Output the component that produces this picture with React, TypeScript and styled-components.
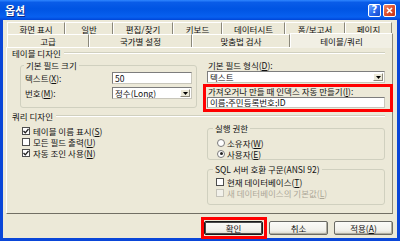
import React from 'react';
import styled, { createGlobalStyle } from 'styled-components';

const GlobalStyle = createGlobalStyle`
  html, body {
    margin: 0;
    padding: 0;
    background: #ffffff;
  }
  body {
    font-family: 'Noto Sans CJK KR', 'Noto Sans', sans-serif;
    color: #111;
  }
`;

const Window = styled.div`
  width: 400px;
  height: 241px;
  display: flex;
  flex-direction: column;
  background: #0a46d8;
  overflow: hidden;
`;

const TitleBar = styled.div`
  height: 20px;
  flex: none;
  display: flex;
  align-items: center;
  padding: 0 4px 0 5px;
  background: linear-gradient(
    to bottom,
    #2f86ff 0%,
    #0a5ce8 12%,
    #0054e3 45%,
    #0860f0 85%,
    #0045d8 100%
  );
`;

const Title = styled.div`
  flex: 1;
  color: #fff;
  font-size: 11px;
  font-weight: bold;
  line-height: 12px;
  text-shadow: 1px 1px 0 #0a2a8a;
`;

interface CaptionButtonProps {
  $kind: 'help' | 'close';
}

const CaptionButton = styled.div<CaptionButtonProps>`
  width: 13px;
  height: 13px;
  box-sizing: border-box;
  margin-left: 2px;
  border: 1px solid #fff;
  border-radius: 2px;
  display: flex;
  align-items: center;
  justify-content: center;
  background: ${(p) =>
    p.$kind === 'close'
      ? 'linear-gradient(135deg, #f08a6a 0%, #e0502e 50%, #c1331a 100%)'
      : 'linear-gradient(135deg, #6ea4ff 0%, #2a6cf0 50%, #1447c8 100%)'};
  color: #fff;
  font-family: 'DejaVu Sans', sans-serif;
  font-weight: bold;
  font-size: 10px;
  line-height: 10px;
`;

const Body = styled.div`
  flex: 1;
  margin: 0 3px 3px 3px;
  padding: 2px 4px 0 3px;
  background: #ece9d8;
  display: flex;
  flex-direction: column;
`;

interface TabRowProps {
  $h: number;
}

const TabRow = styled.div<TabRowProps>`
  display: flex;
  height: ${(p) => p.$h}px;
  margin-left: 1px;
`;

interface TabProps {
  $w: number;
  $active?: boolean;
}

const Tab = styled.div<TabProps>`
  width: ${(p) => p.$w}px;
  box-sizing: border-box;
  border-top: 1px solid #ffffff;
  border-left: 1px solid #ffffff;
  border-right: 1px solid #8b887a;
  display: flex;
  align-items: center;
  justify-content: center;
  font-size: 8.5px;
  line-height: 10px;
  white-space: nowrap;
  height: ${(p) => (p.$active ? 'calc(100% + 2px)' : '100%')};
  margin-top: ${(p) => (p.$active ? '-1px' : '0')};
  background: ${(p) => (p.$active ? '#f1efe4' : '#ece9d8')};
  position: ${(p) => (p.$active ? 'relative' : 'static')};
  z-index: ${(p) => (p.$active ? 1 : 0)};
`;

const Panel = styled.div`
  width: 387px;
  height: 167px;
  box-sizing: border-box;
  border-top: 1px solid #ffffff;
  border-left: 1px solid #ffffff;
  border-right: 1px solid #8b887a;
  border-bottom: 1px solid #716f64;
  background: #ece9d8;
  display: flex;
  flex-direction: column;
`;

interface SectionHeaderProps {
  $top: number;
}

const SectionHeader = styled.div<SectionHeaderProps>`
  display: flex;
  align-items: center;
  height: 10px;
  margin-top: ${(p) => p.$top}px;
  padding: 0 7px 0 5px;
  font-size: 8.5px;
  line-height: 10px;
  white-space: nowrap;
  &::after {
    content: '';
    flex: 1;
    margin-left: 3px;
    border-top: 1px solid #d0d0bf;
    border-bottom: 1px solid #ffffff;
  }
`;

interface ColumnsProps {
  $top: number;
}

const Columns = styled.div<ColumnsProps>`
  display: grid;
  grid-template-columns: 177px 178px;
  column-gap: 10px;
  padding-left: 13px;
  margin-top: ${(p) => p.$top}px;
  align-items: start;
`;

const Column = styled.div`
  display: flex;
  flex-direction: column;
`;

interface GroupBoxProps {
  $h?: number;
  $top?: number;
  $padLeft: number;
  $padTop: number;
  $padBottom?: number;
}

const GroupBox = styled.fieldset<GroupBoxProps>`
  margin: ${(p) => p.$top || 0}px 0 0 0;
  min-width: 0;
  box-sizing: border-box;
  border: 1px solid #d0d0bf;
  border-radius: 3px;
  padding: ${(p) => p.$padTop}px 4px ${(p) => p.$padBottom || 0}px
    ${(p) => p.$padLeft}px;
  ${(p) => (p.$h ? `height: ${p.$h}px;` : '')}
  display: flex;
  flex-direction: column;
`;

interface LegendProps {
  $shift?: number;
}

const Legend = styled.legend<LegendProps>`
  padding: 0 2px;
  margin-left: ${(p) => p.$shift || 0}px;
  font-size: 8.5px;
  line-height: 10px;
  white-space: nowrap;
`;

interface FieldRowProps {
  $top?: number;
}

const FieldRow = styled.div<FieldRowProps>`
  display: flex;
  align-items: center;
  justify-content: space-between;
  height: 12px;
  margin-top: ${(p) => p.$top || 0}px;
`;

const Label = styled.div`
  padding-left: 1px;
  font-size: 8.5px;
  line-height: 10px;
  white-space: nowrap;
`;

interface BoxFieldProps {
  $w?: number;
  $h?: number;
  $top?: number;
}

const TextField = styled.div<BoxFieldProps>`
  width: ${(p) => (p.$w ? `${p.$w}px` : '100%')};
  height: ${(p) => p.$h || 12}px;
  margin-top: ${(p) => p.$top || 0}px;
  box-sizing: border-box;
  background: #ffffff;
  border: 1px solid;
  border-color: #7d7d7d #c8c6bb #c8c6bb #7d7d7d;
  padding-left: 2px;
  font-size: 8.5px;
  line-height: ${(p) => (p.$h || 12) - 2}px;
  white-space: nowrap;
  overflow: hidden;
`;

const SelectField = styled(TextField)`
  display: flex;
  align-items: center;
  justify-content: space-between;
  padding-right: 1px;
`;

const DropButton = styled.div`
  width: 10px;
  height: 8px;
  box-sizing: border-box;
  border: 1px solid;
  border-color: #ffffff #8b887a #8b887a #ffffff;
  background: #ece9d8;
  display: flex;
  align-items: center;
  justify-content: center;
`;

/* red annotation frame drawn over the index field */
const HighlightArea = styled.div`
  position: relative;
  margin-top: 3px;
  display: flex;
  flex-direction: column;
  &::after {
    content: '';
    position: absolute;
    top: -2px;
    bottom: -4px;
    left: -4px;
    right: -8px;
    border: 3px solid #ff0000;
    pointer-events: none;
  }
`;

interface OptionRowProps {
  $disabled?: boolean;
}

const OptionRow = styled.div<OptionRowProps>`
  display: flex;
  align-items: center;
  height: 11px;
  font-size: 8.5px;
  line-height: 10px;
  white-space: nowrap;
  color: ${(p) => (p.$disabled ? '#aca899' : '#111')};
`;

const OptionList = styled.div`
  display: flex;
  flex-direction: column;
  margin-top: 4px;
  padding-left: 2px;
`;

const CheckBox = styled.div<OptionRowProps>`
  width: 8px;
  height: 8px;
  box-sizing: border-box;
  margin-right: 3px;
  border: 1px solid ${(p) => (p.$disabled ? '#c4c2b8' : '#4d4d4d')};
  background: ${(p) => (p.$disabled ? '#f2f1ea' : '#ffffff')};
  display: flex;
  align-items: center;
  justify-content: center;
`;

const Radio = styled.div`
  width: 8px;
  height: 8px;
  box-sizing: border-box;
  margin-right: 2px;
  border: 1px solid #7a7a7a;
  border-radius: 50%;
  background: #ffffff;
  display: flex;
  align-items: center;
  justify-content: center;
`;

const RadioDot = styled.div`
  width: 3px;
  height: 3px;
  border-radius: 50%;
  background: #222;
`;

const ButtonBar = styled.div`
  display: flex;
  justify-content: flex-end;
  gap: 6px;
  margin-top: 7px;
`;

interface ButtonProps {
  $default?: boolean;
  $marked?: boolean;
}

const Button = styled.div<ButtonProps>`
  position: relative;
  width: 59px;
  height: 14px;
  box-sizing: border-box;
  border: 1px solid ${(p) => (p.$default ? '#1a1a1a' : '#6a6a64')};
  border-radius: 2px;
  background: linear-gradient(to bottom, #fbfbf8 0%, #f1f0ea 70%, #dcd8cc 100%);
  box-shadow: ${(p) =>
    p.$default ? 'inset 0 0 0 1px #4a4a4a' : 'inset -1px -1px 0 #b0ad9f'};
  display: flex;
  align-items: center;
  justify-content: center;
  font-size: 8.5px;
  line-height: 10px;
  &::after {
    content: '';
    display: ${(p) => (p.$marked ? 'block' : 'none')};
    position: absolute;
    inset: -5px -5px -5px -4px;
    border: 3px solid #ff0000;
    pointer-events: none;
  }
`;

const Check = () => (
  <svg width="6" height="6" viewBox="0 0 6 6">
    <path d="M0.5 3 L2.3 4.8 L5.5 1" fill="none" stroke="#222" strokeWidth="1.3" />
  </svg>
);

const Arrow = () => (
  <svg width="5" height="3" viewBox="0 0 5 3">
    <path d="M0 0 H5 L2.5 3 Z" fill="#000" />
  </svg>
);

const topTabs = [
  { label: '화면 표시', w: 58 },
  { label: '일반', w: 48 },
  { label: '편집/찾기', w: 60 },
  { label: '키보드', w: 49 },
  { label: '데이터시트', w: 63 },
  { label: '폼/보고서', w: 60 },
  { label: '페이지', w: 47 },
];

const bottomTabs = [
  { label: '고급', w: 82 },
  { label: '국가별 설정', w: 103 },
  { label: '맞춤법 검사', w: 98 },
  { label: '테이블/쿼리', w: 103, active: true },
];

const queryChecks = [
  { text: '테이블 이름 표시', key: 'S', checked: true },
  { text: '모든 필드 출력', key: 'U', checked: false },
  { text: '자동 조인 사용', key: 'N', checked: true },
];

const App = () => {
  return (
    <Window>
      <GlobalStyle />
      <TitleBar>
        <Title>옵션</Title>
        <CaptionButton $kind="help">?</CaptionButton>
        <CaptionButton $kind="close">
          <svg width="7" height="7" viewBox="0 0 7 7">
            <path d="M1 1 L6 6 M6 1 L1 6" stroke="#fff" strokeWidth="1.6" />
          </svg>
        </CaptionButton>
      </TitleBar>
      <Body>
        <TabRow $h={12}>
          {topTabs.map((t) => (
            <Tab key={t.label} $w={t.w}>
              {t.label}
            </Tab>
          ))}
        </TabRow>
        <TabRow $h={13}>
          {bottomTabs.map((t) => (
            <Tab key={t.label} $w={t.w} $active={t.active}>
              {t.label}
            </Tab>
          ))}
        </TabRow>
        <Panel>
          <SectionHeader $top={0}>테이블 디자인</SectionHeader>
          <Columns $top={2}>
            <GroupBox $h={48} $padLeft={3} $padTop={2}>
              <Legend>기본 필드 크기</Legend>
              <FieldRow>
                <Label>
                  텍스트(<u>X</u>):
                </Label>
                <TextField $w={80}>50</TextField>
              </FieldRow>
              <FieldRow $top={3}>
                <Label>
                  번호(<u>M</u>):
                </Label>
                <SelectField $w={80}>
                  정수(Long)
                  <DropButton>
                    <Arrow />
                  </DropButton>
                </SelectField>
              </FieldRow>
            </GroupBox>
            <Column>
              <Label>
                기본 필드 형식(<u>D</u>):
              </Label>
              <SelectField $top={1}>
                텍스트
                <DropButton>
                  <Arrow />
                </DropButton>
              </SelectField>
              <HighlightArea>
                <Label>
                  가져오거나 만들 때 인덱스 자동 만들기(<u>I</u>):
                </Label>
                <TextField $h={11} $top={1}>
                  이름;주민등록번호;ID
                </TextField>
              </HighlightArea>
            </Column>
          </Columns>
          <SectionHeader $top={3}>쿼리 디자인</SectionHeader>
          <Columns $top={0}>
            <OptionList>
              {queryChecks.map((c) => (
                <OptionRow key={c.key}>
                  <CheckBox>{c.checked && <Check />}</CheckBox>
                  {c.text}(<u>{c.key}</u>)
                </OptionRow>
              ))}
            </OptionList>
            <Column>
              <GroupBox $top={2} $h={37} $padLeft={9} $padTop={4}>
                <Legend $shift={-4}>실행 권한</Legend>
                <OptionRow>
                  <Radio />
                  소유자(<u>W</u>)
                </OptionRow>
                <OptionRow>
                  <Radio>
                    <RadioDot />
                  </Radio>
                  사용자(<u>E</u>)
                </OptionRow>
              </GroupBox>
              <GroupBox $top={4} $padLeft={8} $padTop={2} $padBottom={6}>
                <Legend $shift={-3}>SQL 서버 호환 구문(ANSI 92)</Legend>
                <OptionRow>
                  <CheckBox />
                  현재 데이터베이스(<u>T</u>)
                </OptionRow>
                <OptionRow $disabled>
                  <CheckBox $disabled />
                  새 데이터베이스의 기본값(<u>L</u>)
                </OptionRow>
              </GroupBox>
            </Column>
          </Columns>
        </Panel>
        <ButtonBar>
          <Button $default $marked>
            확인
          </Button>
          <Button>취소</Button>
          <Button>
            적용(<u>A</u>)
          </Button>
        </ButtonBar>
      </Body>
    </Window>
  );
};

export default App;
